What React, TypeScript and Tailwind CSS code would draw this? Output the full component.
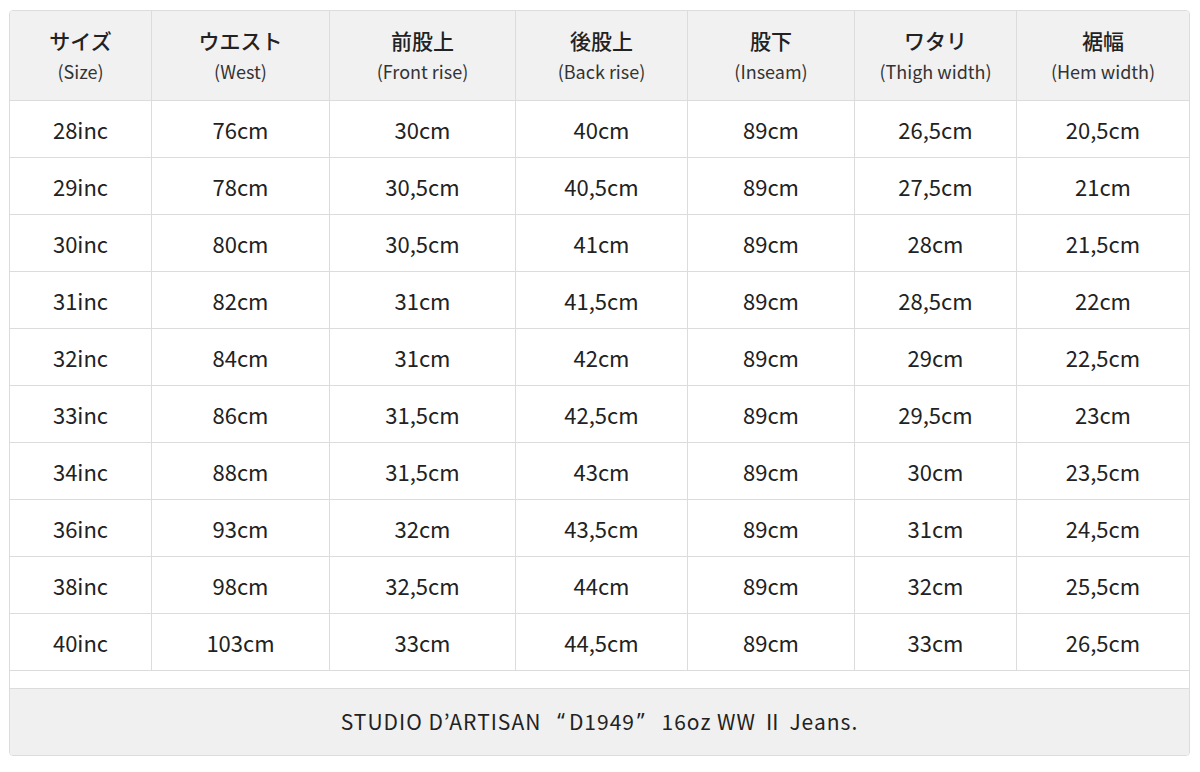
import React from "react";

const headers: [string, string][] = [
  ["サイズ", "(Size)"],
  ["ウエスト", "(West)"],
  ["前股上", "(Front rise)"],
  ["後股上", "(Back rise)"],
  ["股下", "(Inseam)"],
  ["ワタリ", "(Thigh width)"],
  ["裾幅", "(Hem width)"],
];

const rows: string[][] = [
  ["28inc", "76cm", "30cm", "40cm", "89cm", "26,5cm", "20,5cm"],
  ["29inc", "78cm", "30,5cm", "40,5cm", "89cm", "27,5cm", "21cm"],
  ["30inc", "80cm", "30,5cm", "41cm", "89cm", "28cm", "21,5cm"],
  ["31inc", "82cm", "31cm", "41,5cm", "89cm", "28,5cm", "22cm"],
  ["32inc", "84cm", "31cm", "42cm", "89cm", "29cm", "22,5cm"],
  ["33inc", "86cm", "31,5cm", "42,5cm", "89cm", "29,5cm", "23cm"],
  ["34inc", "88cm", "31,5cm", "43cm", "89cm", "30cm", "23,5cm"],
  ["36inc", "93cm", "32cm", "43,5cm", "89cm", "31cm", "24,5cm"],
  ["38inc", "98cm", "32,5cm", "44cm", "89cm", "32cm", "25,5cm"],
  ["40inc", "103cm", "33cm", "44,5cm", "89cm", "33cm", "26,5cm"],
];

const grid =
  "grid grid-cols-[142px_178px_186px_172px_167px_162px_172px]";

export default function App() {
  return (
    <div
      className="w-[1200px] h-[772px] bg-white pt-[10px] pl-[9px] text-[#222]"
      style={{ fontFamily: '"Noto Sans CJK JP", "Noto Sans", sans-serif' }}
    >
      <div className="w-[1181px] border border-[#dcdcdc] rounded-[4px] overflow-hidden">
        <div className={`${grid} bg-[#f1f1f1] border-b border-[#dcdcdc]`}>
          {headers.map(([jp, en], i) => (
            <div
              key={i}
              className={`h-[89px] flex flex-col items-center justify-center ${
                i < 6 ? "border-r border-[#dcdcdc]" : ""
              }`}
            >
              <div className="text-[21px] leading-[28px] font-medium -mt-[3px]">{jp}</div>
              <div className="text-[18px] leading-[24px] mt-[5px] text-[#333]">{en}</div>
            </div>
          ))}
        </div>
        {rows.map((r, ri) => (
          <div key={ri} className={`${grid} border-b border-[#dcdcdc]`}>
            {r.map((c, i) => (
              <div
                key={i}
                className={`h-[56px] flex items-center justify-center text-[22px] ${
                  i < 6 ? "border-r border-[#dcdcdc]" : ""
                }`}
              >
                {c}
              </div>
            ))}
          </div>
        ))}
        <div className="h-[18px] border-b border-[#dcdcdc]" />
        <div className="h-[66px] bg-[#f0f0f0] flex items-center justify-center text-[21px] tracking-[1px]">
          <span>STUDIO D’ARTISAN</span>
          <span className="ml-[16px] font-['Noto_Sans',sans-serif]">“</span>
          <span className="ml-[3px]">D1949</span>
          <span className="ml-[2px] font-['Noto_Sans',sans-serif]">”</span>
          <span className="ml-[16px]">16oz WW Ⅱ Jeans.</span>
        </div>
      </div>
    </div>
  );
}
